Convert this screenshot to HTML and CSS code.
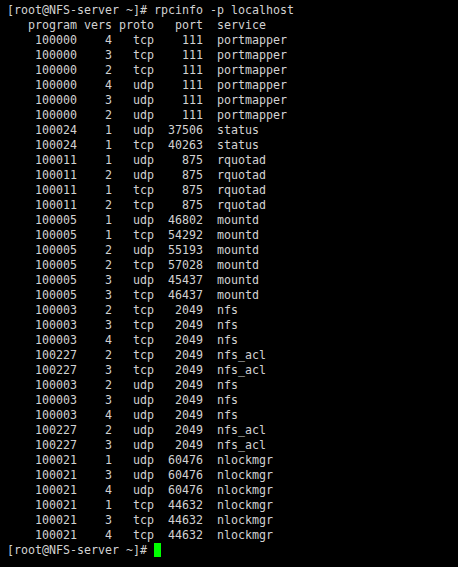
FILE: index.html
```html
<!DOCTYPE html>
<html>
<head>
<meta charset="utf-8">
<link rel="stylesheet" href="styles.css">
</head>
<body>
<pre class="term">[root@NFS-server ~]# rpcinfo -p localhost
   program vers proto   port  service
    100000    4   tcp    111  portmapper
    100000    3   tcp    111  portmapper
    100000    2   tcp    111  portmapper
    100000    4   udp    111  portmapper
    100000    3   udp    111  portmapper
    100000    2   udp    111  portmapper
    100024    1   udp  37506  status
    100024    1   tcp  40263  status
    100011    1   udp    875  rquotad
    100011    2   udp    875  rquotad
    100011    1   tcp    875  rquotad
    100011    2   tcp    875  rquotad
    100005    1   udp  46802  mountd
    100005    1   tcp  54292  mountd
    100005    2   udp  55193  mountd
    100005    2   tcp  57028  mountd
    100005    3   udp  45437  mountd
    100005    3   tcp  46437  mountd
    100003    2   tcp   2049  nfs
    100003    3   tcp   2049  nfs
    100003    4   tcp   2049  nfs
    100227    2   tcp   2049  nfs_acl
    100227    3   tcp   2049  nfs_acl
    100003    2   udp   2049  nfs
    100003    3   udp   2049  nfs
    100003    4   udp   2049  nfs
    100227    2   udp   2049  nfs_acl
    100227    3   udp   2049  nfs_acl
    100021    1   udp  60476  nlockmgr
    100021    3   udp  60476  nlockmgr
    100021    4   udp  60476  nlockmgr
    100021    1   tcp  44632  nlockmgr
    100021    3   tcp  44632  nlockmgr
    100021    4   tcp  44632  nlockmgr
[root@NFS-server ~]# <span class="cursor"></span></pre>
</body>
</html>
```
FILE: styles.css
```css
html, body {
  margin: 0;
  padding: 0;
  background: #000000;
  width: 458px;
  height: 567px;
  overflow: hidden;
}
.term {
  margin: 0;
  padding: 3px 0 0 7px;
  font-family: "DejaVu Sans Mono", monospace;
  font-size: 11.63px;
  line-height: 15px;
  color: #d2d2d2;
  white-space: pre;
}
.cursor {
  display: inline-block;
  width: 7px;
  height: 14px;
  background: #00ff00;
  vertical-align: -3px;
}
```
